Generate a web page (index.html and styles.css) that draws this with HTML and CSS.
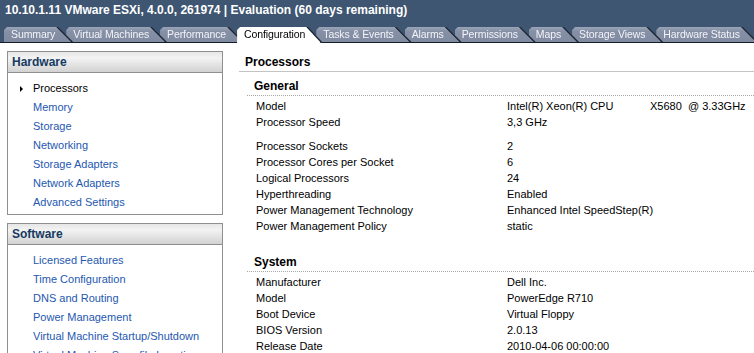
FILE: index.html
```html
<!DOCTYPE html>
<html>
<head>
<meta charset="utf-8">
<link rel="stylesheet" href="styles.css">
</head>
<body>
<div class="top">
  <div class="title">10.10.1.11 VMware ESXi, 4.0.0, 261974 | Evaluation (60 days remaining)</div>
  <div class="tabs">
    <div class="tab"><span class="tab-shape">Summary</span></div>
    <div class="tab"><span class="tab-shape">Virtual Machines</span></div>
    <div class="tab"><span class="tab-shape">Performance</span></div>
    <div class="tab active"><span class="tab-shape">Configuration</span></div>
    <div class="tab"><span class="tab-shape">Tasks &amp; Events</span></div>
    <div class="tab"><span class="tab-shape">Alarms</span></div>
    <div class="tab"><span class="tab-shape">Permissions</span></div>
    <div class="tab"><span class="tab-shape">Maps</span></div>
    <div class="tab"><span class="tab-shape">Storage Views</span></div>
    <div class="tab"><span class="tab-shape">Hardware Status</span></div>
  </div>
</div>
<div class="main">
  <div class="side">
    <div class="box">
      <div class="box-h">Hardware</div>
      <ul class="box-list">
        <li class="sel">Processors</li>
        <li>Memory</li>
        <li>Storage</li>
        <li>Networking</li>
        <li>Storage Adapters</li>
        <li>Network Adapters</li>
        <li>Advanced Settings</li>
      </ul>
    </div>
    <div class="box">
      <div class="box-h">Software</div>
      <ul class="box-list">
        <li>Licensed Features</li>
        <li>Time Configuration</li>
        <li>DNS and Routing</li>
        <li>Power Management</li>
        <li>Virtual Machine Startup/Shutdown</li>
        <li>Virtual Machine Swapfile Location</li>
      </ul>
    </div>
  </div>
  <div class="content">
    <div class="c-title">Processors</div>
    <div class="section">
      <div class="s-title">General</div>
      <div class="rows">
        <div class="row"><span class="lbl">Model</span><span class="val pre">Intel(R) Xeon(R) CPU            X5680  @ 3.33GHz</span></div>
        <div class="row gap-after"><span class="lbl">Processor Speed</span><span class="val">3,3 GHz</span></div>
        <div class="row"><span class="lbl">Processor Sockets</span><span class="val">2</span></div>
        <div class="row"><span class="lbl">Processor Cores per Socket</span><span class="val">6</span></div>
        <div class="row"><span class="lbl">Logical Processors</span><span class="val">24</span></div>
        <div class="row"><span class="lbl">Hyperthreading</span><span class="val">Enabled</span></div>
        <div class="row"><span class="lbl">Power Management Technology</span><span class="val">Enhanced Intel SpeedStep(R)</span></div>
        <div class="row"><span class="lbl">Power Management Policy</span><span class="val">static</span></div>
      </div>
    </div>
    <div class="section sys">
      <div class="s-title">System</div>
      <div class="rows">
        <div class="row"><span class="lbl">Manufacturer</span><span class="val">Dell Inc.</span></div>
        <div class="row"><span class="lbl">Model</span><span class="val">PowerEdge R710</span></div>
        <div class="row"><span class="lbl">Boot Device</span><span class="val">Virtual Floppy</span></div>
        <div class="row"><span class="lbl">BIOS Version</span><span class="val">2.0.13</span></div>
        <div class="row"><span class="lbl">Release Date</span><span class="val">2010-04-06 00:00:00</span></div>
      </div>
    </div>
  </div>
</div>
</body>
</html>
```
FILE: styles.css
```css
* { box-sizing: border-box; }
html, body { margin: 0; padding: 0; }
body {
  width: 754px;
  height: 353px;
  overflow: hidden;
  background: #fff;
  font-family: "Liberation Sans", Arial, sans-serif;
  font-size: 11px;
  color: #000;
}
.top {
  background: #3e5672;
}
.title {
  height: 27px;
  padding: 3px 0 0 5px;
  line-height: 14px;
  font-size: 12px;
  font-weight: bold;
  color: #fff;
  white-space: nowrap;
}
.tabs {
  display: flex;
  height: 16px;
  padding-left: 4px;
  border-bottom: 1px solid #141c28;
}
.tab {
  margin-right: -5px;
  height: 15px;
  filter: drop-shadow(1px 0 0 #111822) drop-shadow(1px 0 0 #2a3446);
}
.tab:nth-child(1) { z-index: 10; }
.tab:nth-child(2) { z-index: 9; }
.tab:nth-child(3) { z-index: 8; }
.tab:nth-child(5) { z-index: 6; }
.tab:nth-child(6) { z-index: 5; }
.tab:nth-child(7) { z-index: 4; }
.tab:nth-child(8) { z-index: 3; }
.tab:nth-child(9) { z-index: 2; }
.tab:nth-child(10) { z-index: 1; }
.tab.active { z-index: 20; height: 16px; }
.tab-shape {
  display: block;
  height: 100%;
  padding: 0 16px 0 7px;
  line-height: 15px;
  font-size: 10.5px;
  letter-spacing: -0.1px;
  background: linear-gradient(#9aa4b8, #8590a6 30%, #808ba2);
  color: #f4f4f8;
  white-space: nowrap;
  clip-path: polygon(0 3px, 3px 0, calc(100% - 15px) 0, 100% 100%, 0 100%);
}
.tab.active .tab-shape {
  background: #fff;
  color: #000;
  clip-path: polygon(0 3px, 3px 0, calc(100% - 15px) 0, calc(100% - 1px) 15px, calc(100% - 1px) 100%, 0 100%);
}
.main {
  display: flex;
  align-items: flex-start;
}
.side {
  width: 223px;
  padding: 8px 0 0 7px;
  flex: none;
}
.box {
  border: 1px solid #8f8f8f;
  background: #fff;
  margin-bottom: 8px;
}
.box-h {
  height: 21px;
  padding-left: 4px;
  line-height: 20px;
  border-bottom: 1px solid #8f8f8f;
  background: linear-gradient(#e6e6e6, #f3f3f3 30%, #d2d2d2);
  color: #163a62;
  font-weight: bold;
  font-size: 12px;
}
.box-list {
  list-style: none;
  margin: 0;
  padding: 6px 0 2px 25px;
}
.box-list li {
  height: 19px;
  line-height: 19px;
  color: #2458b0;
  white-space: nowrap;
  position: relative;
}
.box-list li.sel { color: #000; }
.box-list li.sel::before {
  content: "";
  position: absolute;
  left: -13px;
  top: 7px;
  border-left: 3px solid #000;
  border-top: 3px solid transparent;
  border-bottom: 3px solid transparent;
}
.content {
  flex: 1;
  margin-left: 16px;
  padding-top: 12px;
}
.c-title {
  padding: 0 0 2px 6px;
  line-height: 14px;
  height: 17px;
  font-weight: bold;
  font-size: 12px;
  border-bottom: 1px solid #c4c4c4;
}
.section {
  margin-left: 8px;
  margin-top: 7px;
}
.section.sys { margin-top: 21px; }
.s-title {
  padding: 0 0 2px 7px;
  line-height: 14px;
  height: 17px;
  font-weight: bold;
  font-size: 12px;
  border-bottom: 1px dotted #a8a8a8;
}
.rows { padding-top: 2px; }
.row {
  display: flex;
  height: 16px;
  line-height: 16px;
  padding-left: 9px;
  white-space: nowrap;
}
.row.gap-after { margin-bottom: 8px; }
.lbl { width: 251px; flex: none; }
.pre { white-space: pre; }
```
